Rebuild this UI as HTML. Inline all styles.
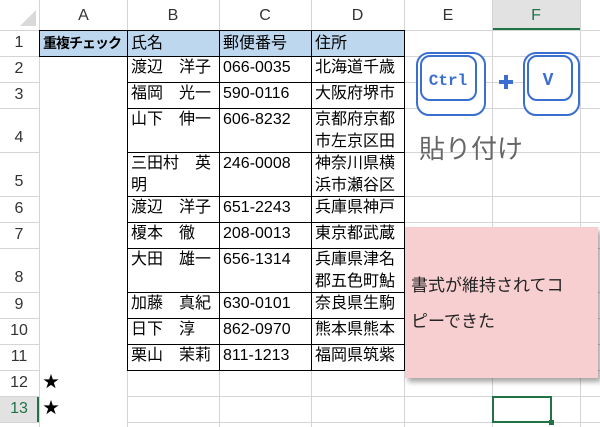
<!DOCTYPE html><html><head><meta charset="utf-8"><style>
body{margin:0;width:600px;height:427px;overflow:hidden;background:#fff;font-family:"Liberation Sans","Noto Sans CJK JP",sans-serif;position:relative}
.a{position:absolute;box-sizing:border-box}
.vl{position:absolute;width:1px;background:#d4d4d4;top:0;height:427px}
.hl{position:absolute;height:1px;background:#d4d4d4;left:0;width:600px}
.ch{position:absolute;top:0;height:30px;line-height:32px;text-align:center;font-size:16px;color:#333}
.rh{position:absolute;left:0;width:38px;text-align:center;font-size:16px;color:#333}
.c{position:absolute;box-sizing:border-box;font-size:16px;color:#000;padding-left:3px;line-height:22px;overflow:hidden;white-space:nowrap}
</style></head><body>
<div class="a" style="left:0;top:0;width:600px;height:30px;background:#fff"></div>
<div class="a" style="left:492px;top:0;width:88px;height:30px;background:#e2e2e2;border-bottom:2px solid #217346"></div>
<div class="a" style="left:0;top:396px;width:39px;height:26px;background:#e2e2e2;border-right:2px solid #217346"></div>
<div class="vl" style="left:39px"></div><div class="vl" style="left:127px"></div><div class="vl" style="left:219px"></div><div class="vl" style="left:311px"></div><div class="vl" style="left:404px"></div><div class="vl" style="left:492px"></div><div class="vl" style="left:580px"></div>
<div class="hl" style="top:30px"></div><div class="hl" style="top:56px"></div><div class="hl" style="top:82px"></div><div class="hl" style="top:108px"></div><div class="hl" style="top:152px"></div><div class="hl" style="top:196px"></div><div class="hl" style="top:222px"></div><div class="hl" style="top:248px"></div><div class="hl" style="top:292px"></div><div class="hl" style="top:318px"></div><div class="hl" style="top:344px"></div><div class="hl" style="top:370px"></div><div class="hl" style="top:396px"></div><div class="hl" style="top:422px"></div>
<div class="a" style="left:40px;top:57px;width:87px;height:370px;background:#fff"></div>
<svg class="a" style="left:20px;top:10px" width="16" height="16"><polygon points="16,0 16,16 0,16" fill="#d9d9d9"/></svg>
<div class="ch" style="left:40px;width:87px">A</div><div class="ch" style="left:127px;width:92px">B</div><div class="ch" style="left:219px;width:92px">C</div><div class="ch" style="left:311px;width:93px">D</div><div class="ch" style="left:404px;width:88px">E</div><div class="ch" style="left:492px;width:88px;color:#217346">F</div>
<div class="rh" style="top:30px;line-height:26px">1</div><div class="rh" style="top:56px;line-height:26px">2</div><div class="rh" style="top:82px;line-height:26px">3</div><div class="rh" style="top:108px;line-height:60px">4</div><div class="rh" style="top:152px;line-height:60px">5</div><div class="rh" style="top:196px;line-height:26px">6</div><div class="rh" style="top:222px;line-height:26px">7</div><div class="rh" style="top:248px;line-height:60px">8</div><div class="rh" style="top:292px;line-height:26px">9</div><div class="rh" style="top:318px;line-height:26px">10</div><div class="rh" style="top:344px;line-height:26px">11</div><div class="rh" style="top:370px;line-height:26px">12</div><div class="rh" style="top:396px;line-height:26px;color:#217346">13</div>
<div class="a" style="left:40px;top:31px;width:364px;height:25px;background:#bdd7ee"></div>
<div class="a" style="left:39px;top:30px;width:89px;height:27px;border:1px solid #000"></div>
<div class="a" style="left:127px;top:30px;width:278px;height:341px;border:1px solid #000"></div>
<div class="a" style="left:219px;top:30px;width:1px;height:341px;background:#000"></div>
<div class="a" style="left:311px;top:30px;width:1px;height:341px;background:#000"></div>
<div class="a" style="left:127px;top:56px;width:278px;height:1px;background:#000;box-shadow:0 26px 0 #000,0 52px 0 #000,0 96px 0 #000,0 140px 0 #000,0 166px 0 #000,0 192px 0 #000,0 236px 0 #000,0 262px 0 #000,0 288px 0 #000"></div>
<div class="c" style="left:40px;top:31px;letter-spacing:-1px;font-weight:bold;font-size:14px;line-height:25px">重複チェック</div>
<div class="c" style="left:128px;top:31px;line-height:25px">氏名</div><div class="c" style="left:220px;top:31px;line-height:25px">郵便番号</div><div class="c" style="left:312px;top:31px;line-height:25px">住所</div>
<div class="c" style="left:128px;top:57px;width:90px">渡辺　洋子</div><div class="c" style="left:220px;top:57px">066-0035</div><div class="c" style="left:312px;top:57px;width:92px">北海道千歳</div>
<div class="c" style="left:128px;top:83px">福岡　光一</div><div class="c" style="left:220px;top:83px">590-0116</div><div class="c" style="left:312px;top:83px;width:92px">大阪府堺市</div>
<div class="c" style="left:128px;top:109px">山下　伸一</div><div class="c" style="left:220px;top:109px">606-8232</div><div class="c" style="left:312px;top:109px;width:92px">京都府京都<br>市左京区田</div>
<div class="c" style="left:128px;top:153px;width:91px">三田村　英<br>明</div><div class="c" style="left:220px;top:153px">246-0008</div><div class="c" style="left:312px;top:153px;width:92px">神奈川県横<br>浜市瀬谷区</div>
<div class="c" style="left:128px;top:197px">渡辺　洋子</div><div class="c" style="left:220px;top:197px">651-2243</div><div class="c" style="left:312px;top:197px;width:92px">兵庫県神戸</div>
<div class="c" style="left:128px;top:223px">榎本　徹</div><div class="c" style="left:220px;top:223px">208-0013</div><div class="c" style="left:312px;top:223px;width:92px">東京都武蔵</div>
<div class="c" style="left:128px;top:249px">大田　雄一</div><div class="c" style="left:220px;top:249px">656-1314</div><div class="c" style="left:312px;top:249px;width:92px">兵庫県津名<br>郡五色町鮎</div>
<div class="c" style="left:128px;top:293px">加藤　真紀</div><div class="c" style="left:220px;top:293px">630-0101</div><div class="c" style="left:312px;top:293px;width:92px">奈良県生駒</div>
<div class="c" style="left:128px;top:319px">日下　淳</div><div class="c" style="left:220px;top:319px">862-0970</div><div class="c" style="left:312px;top:319px;width:92px">熊本県熊本</div>
<div class="c" style="left:128px;top:345px">栗山　茉莉</div><div class="c" style="left:220px;top:345px">811-1213</div><div class="c" style="left:312px;top:345px;width:92px">福岡県筑紫</div>
<div class="c" style="left:40px;top:372px;font-size:16px">★</div><div class="c" style="left:40px;top:398px;font-size:16px">★</div>
<div class="a" style="left:492px;top:396px;width:60px;height:27px;border:2px solid #217346"></div>
<div class="a" style="left:549px;top:420px;width:5px;height:5px;background:#217346"></div>
<svg class="a" style="left:410px;top:48px" width="180" height="72">
<rect x="7" y="5" width="68" height="62" rx="12" fill="#fff" stroke="#3a6fd0" stroke-width="2"/>
<rect x="11" y="8" width="55" height="44" rx="9" fill="#fff" stroke="#3a6fd0" stroke-width="2"/>
<text x="38" y="37" text-anchor="middle" font-family="Liberation Mono,monospace" font-size="16" font-weight="bold" fill="#3a6fd0">Ctrl</text>
<path d="M89 34h14M96 27v14" stroke="#3a6fd0" stroke-width="4"/>
<rect x="114" y="5" width="55" height="62" rx="12" fill="#fff" stroke="#3a6fd0" stroke-width="2"/>
<rect x="118" y="8" width="44" height="44" rx="9" fill="#fff" stroke="#3a6fd0" stroke-width="2"/>
<text x="138" y="37" text-anchor="middle" font-family="Liberation Mono,monospace" font-size="18" font-weight="bold" fill="#3a6fd0">V</text>
</svg>
<div class="a" style="left:419px;top:132px;font-size:26px;color:#666;line-height:34px">貼り付け</div>
<div class="a" style="left:405px;top:227px;width:193px;height:151px;background:#f8cfd0;box-shadow:3px 4px 5px rgba(0,0,0,.35);font-size:17px;color:#222;padding:41px 0 0 6px;line-height:36px;white-space:nowrap">書式が維持されてコ<br>ピーできた</div>
</body></html>
